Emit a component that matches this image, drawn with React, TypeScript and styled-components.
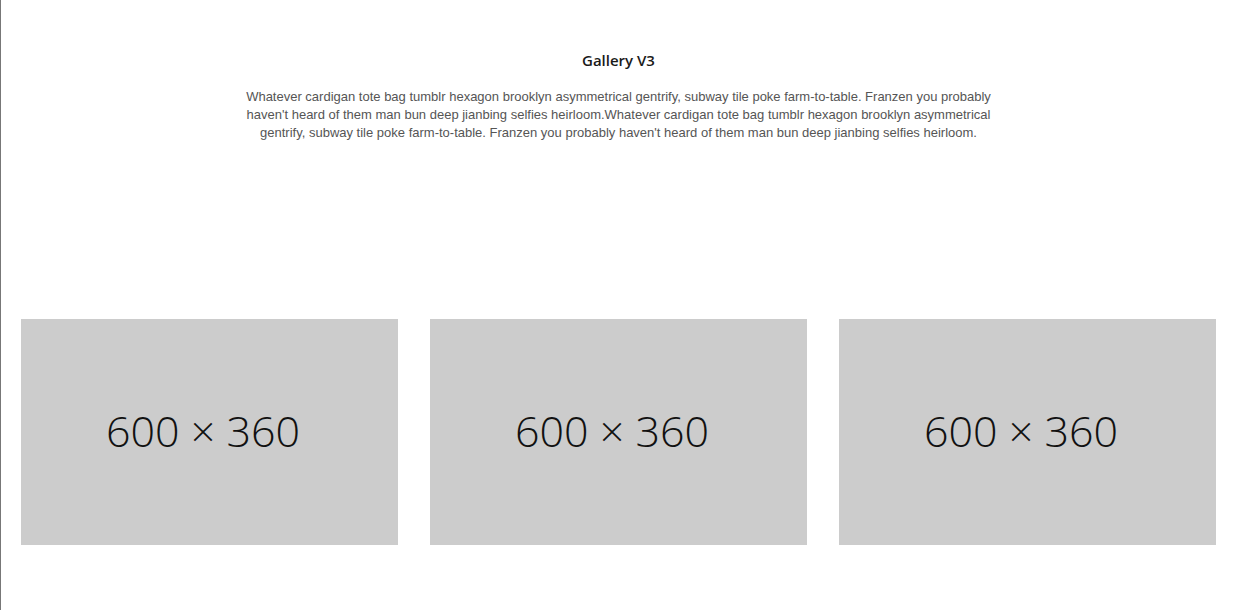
import React from "react";
import styled, { createGlobalStyle } from "styled-components";

const Global = createGlobalStyle`
  html, body { margin: 0; padding: 0; background: #fff; }
  body { border-left: 1px solid #777; min-height: 610px; box-sizing: border-box; }
`;

const Section = styled.section`
  padding: 50px 18px 0 20px;
  font-family: "Liberation Sans", Arial, sans-serif;
`;

const Header = styled.header`
  display: flex;
  flex-direction: column;
  align-items: center;
  text-align: center;
`;

const Title = styled.h1`
  margin: 0 0 18px;
  font-family: "Open Sans", "Noto Sans", sans-serif;
  font-size: 15px;
  font-weight: 600;
  color: #1a1a1a;
  line-height: 20px;
`;

const Lead = styled.p`
  margin: 0;
  max-width: 760px;
  font-size: 13px;
  line-height: 18px;
  color: #555;
`;

const Grid = styled.div`
  display: grid;
  grid-template-columns: repeat(3, 1fr);
  gap: 32px;
  margin-top: 177px;
`;

const Placeholder = styled.div`
  height: 226px;
  box-sizing: border-box;
  background: #cccccc;
  display: flex;
  align-items: center;
  justify-content: center;
  padding: 0 13px 4px 0;
  font-family: "Open Sans", "Noto Sans", sans-serif;
  font-weight: 300;
  font-size: 43px;
  color: #111;
`;

const text =
  "Whatever cardigan tote bag tumblr hexagon brooklyn asymmetrical gentrify, subway tile poke farm-to-table. Franzen you probably haven't heard of them man bun deep jianbing selfies heirloom.Whatever cardigan tote bag tumblr hexagon brooklyn asymmetrical gentrify, subway tile poke farm-to-table. Franzen you probably haven't heard of them man bun deep jianbing selfies heirloom.";

export default function App() {
  return (
    <>
      <Global />
      <Section>
        <Header>
          <Title>Gallery V3</Title>
          <Lead>{text}</Lead>
        </Header>
        <Grid>
          {[0, 1, 2].map((i) => (
            <Placeholder key={i}>600 × 360</Placeholder>
          ))}
        </Grid>
      </Section>
    </>
  );
}
